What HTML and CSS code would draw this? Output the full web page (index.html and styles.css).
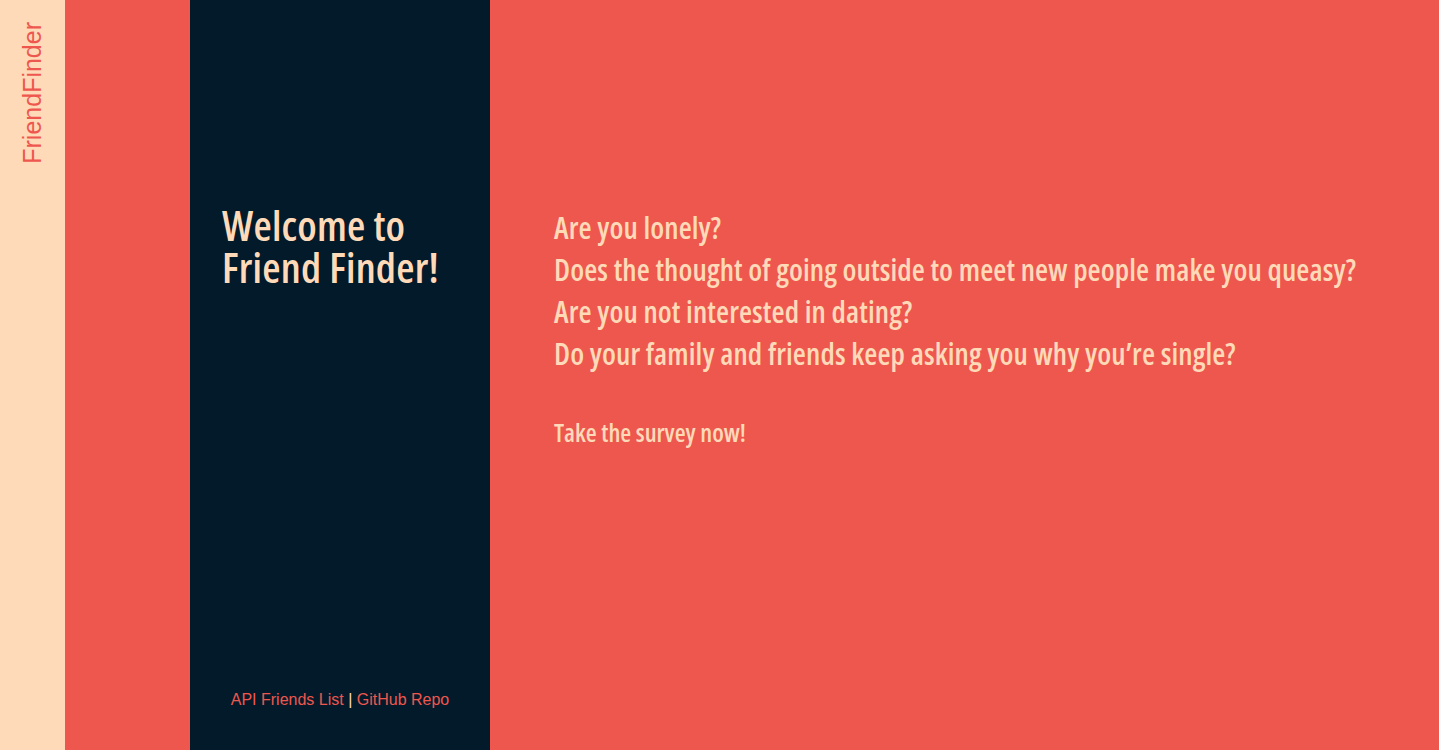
FILE: index.html
```html
<!DOCTYPE html>
<html lang="en">
<head>
    <meta charset="UTF-8">
    <meta name="viewport" content="width=device-width, initial-scale=1.0">
    <title>Friend Finder</title>
    <link rel="stylesheet" href="styles.css">
</head>
<body>
    <div class="page">
        <div class="brand-bar">
            <span class="brand">FriendFinder</span>
        </div>
        <div class="spacer"></div>
        <div class="sidebar">
            <h1>Welcome to<br>Friend Finder!</h1>
            <div class="links">
                <a href="#">API Friends List</a> | <a href="#">GitHub Repo</a>
            </div>
        </div>
        <div class="content">
            <p>Are you lonely?</p>
            <p>Does the thought of going outside to meet new people make you queasy?</p>
            <p>Are you not interested in dating?</p>
            <p>Do your family and friends keep asking you why you’re single?</p>
            <a class="survey" href="#">Take the survey now!</a>
        </div>
    </div>
</body>
</html>
```

FILE: styles.css
```css
body {
    margin: 0;
    padding: 0;
    background-color: #ee574e;
    font-family: "Liberation Sans", Arial, sans-serif;
}

.page {
    display: flex;
    height: 750px;
}

.brand-bar {
    width: 65px;
    background-color: #ffdab9;
    display: flex;
    justify-content: center;
}

.brand {
    writing-mode: vertical-rl;
    transform: rotate(180deg);
    align-self: flex-start;
    margin-top: 22px;
    color: #ee574e;
    font-size: 25px;
    line-height: 25px;
}

.spacer {
    width: 125px;
    background-color: #ee574e;
}

.sidebar {
    width: 300px;
    background-color: #031a2b;
    display: flex;
    flex-direction: column;
    padding: 0 32px;
    box-sizing: border-box;
}

h1 {
    margin: 204px 0 0;
    color: #ffdab9;
    font-family: "Open Sans", sans-serif;
    font-stretch: condensed;
    font-weight: 600;
    font-size: 42px;
    line-height: 42px;
    letter-spacing: 0.2px;
    white-space: nowrap;
}

.links {
    margin-top: auto;
    margin-bottom: 41px;
    text-align: center;
    color: #ffdab9;
    font-size: 16px;
}

.links a {
    color: #ee574e;
    text-decoration: none;
}

.content {
    flex: 1;
    padding: 207px 0 0 64px;
    color: #ffdab9;
    font-family: "Open Sans", sans-serif;
    font-stretch: condensed;
    font-weight: 600;
}

.content p {
    margin: 0;
    font-size: 30px;
    line-height: 42px;
    letter-spacing: 0.1px;
    white-space: nowrap;
}

.survey {
    display: inline-block;
    margin-top: 40px;
    color: #ffdab9;
    text-decoration: none;
    font-size: 25px;
}
```
